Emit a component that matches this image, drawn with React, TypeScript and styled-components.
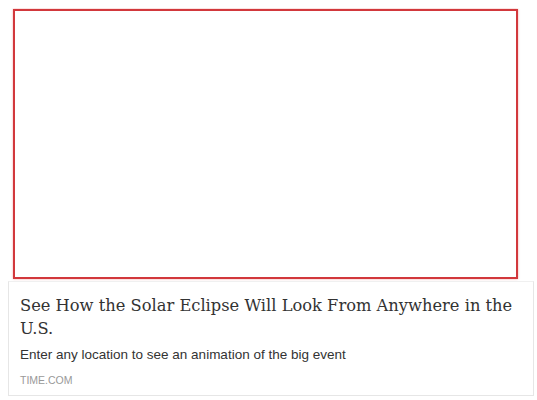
import styled, { createGlobalStyle } from 'styled-components';

const GlobalStyle = createGlobalStyle`
    html, body {
        overflow: hidden;
    }
    body {
        margin: 8px 0 0 8px;
        background: #ffffff;
        font-family: "Liberation Sans", Arial, sans-serif;
    }
`;

const Embed = styled.div`
    width: 526px;
`;

const Media = styled.div`
    box-sizing: border-box;
    width: 505px;
    height: 270px;
    margin: 1px 0 0 5px;
    border: 2px solid #d2383c;
    box-shadow: 0 0 2px rgba(230, 80, 80, 0.5);
    background: #ffffff;
`;

const Card = styled.div`
    box-sizing: border-box;
    width: 526px;
    margin-top: 2px;
    padding: 12px 12px 8px 11px;
    border: 1px solid #e6e6e6;
    border-top-color: #f0f0f0;
    background: #ffffff;
`;

const Title = styled.h2`
    margin: 0;
    font-family: "DejaVu Serif", Georgia, serif;
    font-size: 16.3px;
    font-weight: normal;
    line-height: 23px;
    color: #333333;
`;

const Description = styled.p`
    margin: 7px 0 0;
    font-size: 13.5px;
    line-height: 16px;
    color: #333333;
`;

const Source = styled.div`
    margin-top: 10px;
    font-size: 10.5px;
    line-height: 14px;
    color: #999999;
    text-transform: uppercase;
`;

const App = () => {
    return (
        <>
            <GlobalStyle />
            <Embed>
                <Media />
                <Card>
                    <Title>See How the Solar Eclipse Will Look From Anywhere in the U.S.</Title>
                    <Description>Enter any location to see an animation of the big event</Description>
                    <Source>time.com</Source>
                </Card>
            </Embed>
        </>
    );
};

export default App;
